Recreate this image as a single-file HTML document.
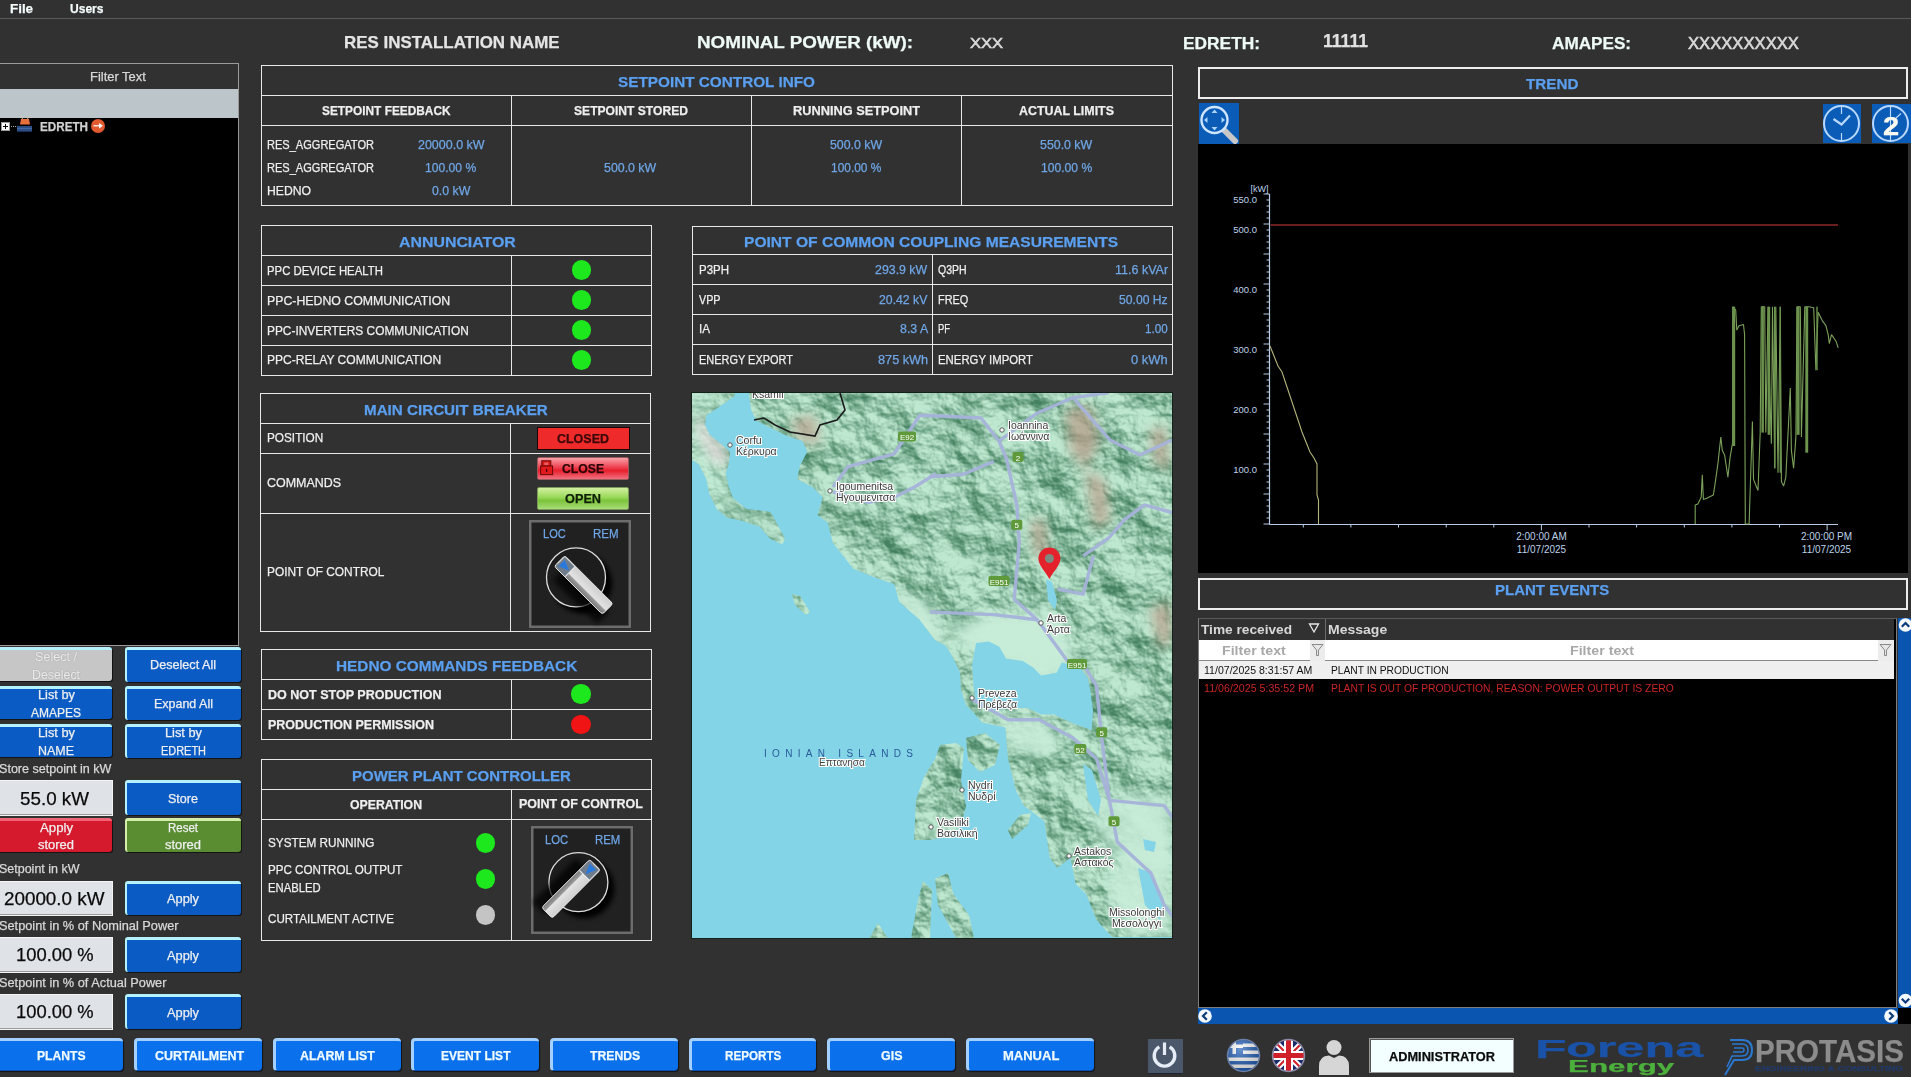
<!DOCTYPE html>
<html><head><meta charset="utf-8"><style>
html,body{margin:0;padding:0;}
body{width:1911px;height:1077px;position:relative;overflow:hidden;background:#313131;font-family:"Liberation Sans",sans-serif;}
.t{position:absolute;white-space:nowrap;transform-origin:0 0;-webkit-text-stroke:0.25px currentColor;}
</style></head><body>
<div class="t" style="left:9.50px;top:2.00px;font-size:13px;line-height:13px;color:#f4fbfb;font-weight:bold;transform:scaleX(1.0286);">File</div>
<div class="t" style="left:69.50px;top:2.00px;font-size:13px;line-height:13px;color:#f4fbfb;font-weight:bold;transform:scaleX(0.9270);">Users</div>
<div style="position:absolute;left:0px;top:18px;width:1911px;height:1px;background:#5a5a5a"></div>
<div class="t" style="left:344.00px;top:33.91px;font-size:17px;line-height:17px;color:#e4e4e4;font-weight:bold;transform:scaleX(0.9950);">RES INSTALLATION NAME</div>
<div class="t" style="left:697.00px;top:35.36px;font-size:16px;line-height:16px;color:#eefaf6;font-weight:bold;transform:scaleX(1.1760);">NOMINAL POWER (kW):</div>
<div class="t" style="left:970.00px;top:34.68px;font-size:15.5px;line-height:15.5px;color:#d8d8d8;transform:scaleX(1.0645);-webkit-text-stroke:0.6px currentColor;">XXX</div>
<div class="t" style="left:1183.00px;top:35.33px;font-size:16.5px;line-height:16.5px;color:#eefaf6;font-weight:bold;transform:scaleX(1.0511);">EDRETH:</div>
<div class="t" style="left:1323.00px;top:33.19px;font-size:17.5px;line-height:17.5px;color:#e0e0e0;font-weight:bold;transform:scaleX(1.0045);">11111</div>
<div class="t" style="left:1552.00px;top:35.23px;font-size:16.5px;line-height:16.5px;color:#eefaf6;font-weight:bold;transform:scaleX(1.0386);">AMAPES:</div>
<div class="t" style="left:1687.60px;top:34.93px;font-size:16.5px;line-height:16.5px;color:#d8d8d8;transform:scaleX(1.0077);-webkit-text-stroke:0.6px currentColor;">XXXXXXXXXX</div>
<div style="position:absolute;left:261px;top:65px;width:912px;height:141px;border:1px solid #e8e8e8;box-sizing:border-box;"></div>
<div style="position:absolute;left:261px;top:95px;width:912px;height:1px;background:#e8e8e8"></div>
<div style="position:absolute;left:261px;top:125px;width:912px;height:1px;background:#e8e8e8"></div>
<div style="position:absolute;left:511px;top:95px;width:1px;height:111px;background:#e8e8e8"></div>
<div style="position:absolute;left:751px;top:95px;width:1px;height:111px;background:#e8e8e8"></div>
<div style="position:absolute;left:961px;top:95px;width:1px;height:111px;background:#e8e8e8"></div>
<div class="t" style="left:618.00px;top:73.78px;font-size:15.5px;line-height:15.5px;color:#5a9ff0;font-weight:bold;transform:scaleX(0.9875);">SETPOINT CONTROL INFO</div>
<div class="t" style="left:322.00px;top:104.07px;font-size:13.5px;line-height:13.5px;color:#efefef;font-weight:bold;transform:scaleX(0.8789);">SETPOINT FEEDBACK</div>
<div class="t" style="left:574.00px;top:104.07px;font-size:13.5px;line-height:13.5px;color:#efefef;font-weight:bold;transform:scaleX(0.8955);">SETPOINT STORED</div>
<div class="t" style="left:792.50px;top:104.07px;font-size:13.5px;line-height:13.5px;color:#efefef;font-weight:bold;transform:scaleX(0.9464);">RUNNING SETPOINT</div>
<div class="t" style="left:1018.50px;top:104.07px;font-size:13.5px;line-height:13.5px;color:#efefef;font-weight:bold;transform:scaleX(0.9199);">ACTUAL LIMITS</div>
<div class="t" style="left:267.00px;top:138.82px;font-size:12.5px;line-height:12.5px;color:#efefef;transform:scaleX(0.8834);">RES_AGGREGATOR</div>
<div class="t" style="left:267.00px;top:161.92px;font-size:12.5px;line-height:12.5px;color:#efefef;transform:scaleX(0.8834);">RES_AGGREGATOR</div>
<div class="t" style="left:267.00px;top:184.82px;font-size:12.5px;line-height:12.5px;color:#efefef;transform:scaleX(0.9751);">HEDNO</div>
<div class="t" style="left:417.60px;top:138.82px;font-size:12.5px;line-height:12.5px;color:#6fa6e6;transform:scaleX(0.9978);">20000.0 kW</div>
<div class="t" style="left:425.40px;top:161.92px;font-size:12.5px;line-height:12.5px;color:#6fa6e6;transform:scaleX(0.9702);">100.00 %</div>
<div class="t" style="left:431.50px;top:184.82px;font-size:12.5px;line-height:12.5px;color:#6fa6e6;transform:scaleX(0.9872);">0.0 kW</div>
<div class="t" style="left:604.00px;top:161.92px;font-size:12.5px;line-height:12.5px;color:#6fa6e6;transform:scaleX(0.9891);">500.0 kW</div>
<div class="t" style="left:830.00px;top:138.82px;font-size:12.5px;line-height:12.5px;color:#6fa6e6;transform:scaleX(0.9872);">500.0 kW</div>
<div class="t" style="left:831.00px;top:161.92px;font-size:12.5px;line-height:12.5px;color:#6fa6e6;transform:scaleX(0.9532);">100.00 %</div>
<div class="t" style="left:1039.70px;top:138.82px;font-size:12.5px;line-height:12.5px;color:#6fa6e6;transform:scaleX(0.9891);">550.0 kW</div>
<div class="t" style="left:1040.50px;top:161.92px;font-size:12.5px;line-height:12.5px;color:#6fa6e6;transform:scaleX(0.9683);">100.00 %</div>
<div style="position:absolute;left:261px;top:225px;width:391px;height:151px;border:1px solid #e8e8e8;box-sizing:border-box;"></div>
<div style="position:absolute;left:261px;top:255px;width:391px;height:1px;background:#e8e8e8"></div>
<div style="position:absolute;left:261px;top:285px;width:391px;height:1px;background:#e8e8e8"></div>
<div style="position:absolute;left:261px;top:315px;width:391px;height:1px;background:#e8e8e8"></div>
<div style="position:absolute;left:261px;top:345px;width:391px;height:1px;background:#e8e8e8"></div>
<div style="position:absolute;left:511px;top:255px;width:1px;height:121px;background:#e8e8e8"></div>
<div class="t" style="left:398.50px;top:233.78px;font-size:15.5px;line-height:15.5px;color:#5a9ff0;font-weight:bold;transform:scaleX(1.0252);">ANNUNCIATOR</div>
<div class="t" style="left:267.30px;top:264.52px;font-size:12.5px;line-height:12.5px;color:#efefef;transform:scaleX(0.9081);">PPC DEVICE HEALTH</div>
<div style="position:absolute;left:571.7px;top:260.3px;width:19.6px;height:19.6px;border-radius:50%;background:#1de81d;"></div>
<div class="t" style="left:267.30px;top:294.62px;font-size:12.5px;line-height:12.5px;color:#efefef;transform:scaleX(0.9851);">PPC-HEDNO COMMUNICATION</div>
<div style="position:absolute;left:571.7px;top:290.4px;width:19.6px;height:19.6px;border-radius:50%;background:#1de81d;"></div>
<div class="t" style="left:267.30px;top:324.52px;font-size:12.5px;line-height:12.5px;color:#efefef;transform:scaleX(0.9514);">PPC-INVERTERS COMMUNICATION</div>
<div style="position:absolute;left:571.7px;top:320.3px;width:19.6px;height:19.6px;border-radius:50%;background:#1de81d;"></div>
<div class="t" style="left:267.30px;top:354.42px;font-size:12.5px;line-height:12.5px;color:#efefef;transform:scaleX(0.9644);">PPC-RELAY COMMUNICATION</div>
<div style="position:absolute;left:571.7px;top:350.2px;width:19.6px;height:19.6px;border-radius:50%;background:#1de81d;"></div>
<div style="position:absolute;left:692px;top:226px;width:481px;height:149px;border:1px solid #e8e8e8;box-sizing:border-box;"></div>
<div style="position:absolute;left:692px;top:254px;width:481px;height:1px;background:#e8e8e8"></div>
<div style="position:absolute;left:692px;top:284px;width:481px;height:1px;background:#e8e8e8"></div>
<div style="position:absolute;left:692px;top:314px;width:481px;height:1px;background:#e8e8e8"></div>
<div style="position:absolute;left:692px;top:344px;width:481px;height:1px;background:#e8e8e8"></div>
<div style="position:absolute;left:932px;top:254px;width:1px;height:121px;background:#e8e8e8"></div>
<div class="t" style="left:744.00px;top:233.58px;font-size:15.5px;line-height:15.5px;color:#5a9ff0;font-weight:bold;transform:scaleX(1.0059);">POINT OF COMMON COUPLING MEASUREMENTS</div>
<div class="t" style="left:698.50px;top:263.82px;font-size:12.5px;line-height:12.5px;color:#efefef;transform:scaleX(0.9195);">P3PH</div>
<div class="t" style="left:875.40px;top:263.82px;font-size:12.5px;line-height:12.5px;color:#6fa6e6;transform:scaleX(0.9891);">293.9 kW</div>
<div class="t" style="left:938.40px;top:263.82px;font-size:12.5px;line-height:12.5px;color:#efefef;transform:scaleX(0.8412);">Q3PH</div>
<div class="t" style="left:1114.50px;top:263.82px;font-size:12.5px;line-height:12.5px;color:#6fa6e6;transform:scaleX(1.0019);">11.6 kVAr</div>
<div class="t" style="left:698.50px;top:293.62px;font-size:12.5px;line-height:12.5px;color:#efefef;transform:scaleX(0.8600);">VPP</div>
<div class="t" style="left:879.30px;top:293.62px;font-size:12.5px;line-height:12.5px;color:#6fa6e6;transform:scaleX(0.9803);">20.42 kV</div>
<div class="t" style="left:938.40px;top:293.62px;font-size:12.5px;line-height:12.5px;color:#efefef;transform:scaleX(0.8719);">FREQ</div>
<div class="t" style="left:1119.00px;top:293.62px;font-size:12.5px;line-height:12.5px;color:#6fa6e6;transform:scaleX(0.9720);">50.00 Hz</div>
<div class="t" style="left:698.50px;top:323.42px;font-size:12.5px;line-height:12.5px;color:#efefef;transform:scaleX(0.9347);">IA</div>
<div class="t" style="left:899.50px;top:323.42px;font-size:12.5px;line-height:12.5px;color:#6fa6e6;transform:scaleX(0.9895);">8.3 A</div>
<div class="t" style="left:938.40px;top:323.42px;font-size:12.5px;line-height:12.5px;color:#efefef;transform:scaleX(0.7563);">PF</div>
<div class="t" style="left:1144.90px;top:323.42px;font-size:12.5px;line-height:12.5px;color:#6fa6e6;transform:scaleX(0.9313);">1.00</div>
<div class="t" style="left:698.50px;top:353.72px;font-size:12.5px;line-height:12.5px;color:#efefef;transform:scaleX(0.8765);">ENERGY EXPORT</div>
<div class="t" style="left:877.50px;top:353.72px;font-size:12.5px;line-height:12.5px;color:#6fa6e6;transform:scaleX(1.0167);">875 kWh</div>
<div class="t" style="left:938.40px;top:353.72px;font-size:12.5px;line-height:12.5px;color:#efefef;transform:scaleX(0.9102);">ENERGY IMPORT</div>
<div class="t" style="left:1131.00px;top:353.72px;font-size:12.5px;line-height:12.5px;color:#6fa6e6;transform:scaleX(1.0346);">0 kWh</div>
<div style="position:absolute;left:260px;top:393px;width:391px;height:239px;border:1px solid #e8e8e8;box-sizing:border-box;"></div>
<div style="position:absolute;left:260px;top:423px;width:391px;height:1px;background:#e8e8e8"></div>
<div style="position:absolute;left:260px;top:453px;width:391px;height:1px;background:#e8e8e8"></div>
<div style="position:absolute;left:260px;top:513px;width:391px;height:1px;background:#e8e8e8"></div>
<div style="position:absolute;left:510px;top:423px;width:1px;height:209px;background:#e8e8e8"></div>
<div class="t" style="left:364.00px;top:401.88px;font-size:15.5px;line-height:15.5px;color:#5a9ff0;font-weight:bold;transform:scaleX(0.9792);">MAIN CIRCUIT BREAKER</div>
<div class="t" style="left:267.30px;top:432.42px;font-size:12.5px;line-height:12.5px;color:#efefef;transform:scaleX(0.9423);">POSITION</div>
<div class="t" style="left:267.30px;top:477.42px;font-size:12.5px;line-height:12.5px;color:#efefef;transform:scaleX(0.9980);">COMMANDS</div>
<div class="t" style="left:267.30px;top:566.12px;font-size:12.5px;line-height:12.5px;color:#efefef;transform:scaleX(0.9516);">POINT OF CONTROL</div>
<div style="position:absolute;left:261px;top:649px;width:391px;height:91px;border:1px solid #e8e8e8;box-sizing:border-box;"></div>
<div style="position:absolute;left:261px;top:679px;width:391px;height:1px;background:#e8e8e8"></div>
<div style="position:absolute;left:261px;top:709px;width:391px;height:1px;background:#e8e8e8"></div>
<div style="position:absolute;left:511px;top:679px;width:1px;height:61px;background:#e8e8e8"></div>
<div class="t" style="left:336.20px;top:657.68px;font-size:15.5px;line-height:15.5px;color:#5a9ff0;font-weight:bold;transform:scaleX(0.9899);">HEDNO COMMANDS FEEDBACK</div>
<div class="t" style="left:268.00px;top:688.00px;font-size:13px;line-height:13px;color:#efefef;font-weight:bold;transform:scaleX(0.9636);">DO NOT STOP PRODUCTION</div>
<div class="t" style="left:268.00px;top:718.20px;font-size:13px;line-height:13px;color:#efefef;font-weight:bold;transform:scaleX(0.9615);">PRODUCTION PERMISSION</div>
<div style="position:absolute;left:571.2px;top:684.4000000000001px;width:19.6px;height:19.6px;border-radius:50%;background:#1de81d;"></div>
<div style="position:absolute;left:571.2px;top:714.5px;width:19.6px;height:19.6px;border-radius:50%;background:#f01414;"></div>
<div style="position:absolute;left:261px;top:759px;width:391px;height:182px;border:1px solid #e8e8e8;box-sizing:border-box;"></div>
<div style="position:absolute;left:261px;top:789px;width:391px;height:1px;background:#e8e8e8"></div>
<div style="position:absolute;left:261px;top:819px;width:391px;height:1px;background:#e8e8e8"></div>
<div style="position:absolute;left:511px;top:789px;width:1px;height:152px;background:#e8e8e8"></div>
<div class="t" style="left:352.30px;top:767.88px;font-size:15.5px;line-height:15.5px;color:#5a9ff0;font-weight:bold;transform:scaleX(0.9658);">POWER PLANT CONTROLLER</div>
<div class="t" style="left:350.00px;top:798.30px;font-size:13px;line-height:13px;color:#efefef;font-weight:bold;transform:scaleX(0.9435);">OPERATION</div>
<div class="t" style="left:519.20px;top:796.50px;font-size:13px;line-height:13px;color:#efefef;font-weight:bold;transform:scaleX(0.9581);">POINT OF CONTROL</div>
<div class="t" style="left:268.00px;top:836.72px;font-size:12.5px;line-height:12.5px;color:#efefef;transform:scaleX(0.9404);">SYSTEM RUNNING</div>
<div class="t" style="left:268.00px;top:864.02px;font-size:12.5px;line-height:12.5px;color:#efefef;transform:scaleX(0.9293);">PPC CONTROL OUTPUT</div>
<div class="t" style="left:268.00px;top:881.82px;font-size:12.5px;line-height:12.5px;color:#efefef;transform:scaleX(0.9011);">ENABLED</div>
<div class="t" style="left:268.00px;top:912.92px;font-size:12.5px;line-height:12.5px;color:#efefef;transform:scaleX(0.9299);">CURTAILMENT ACTIVE</div>
<div style="position:absolute;left:475.5px;top:833.2px;width:19.6px;height:19.6px;border-radius:50%;background:#1de81d;"></div>
<div style="position:absolute;left:475.5px;top:869.2px;width:19.6px;height:19.6px;border-radius:50%;background:#1de81d;"></div>
<div style="position:absolute;left:475.5px;top:905.2px;width:19.6px;height:19.6px;border-radius:50%;background:#c4c4c4;"></div>
<div style="position:absolute;left:0px;top:63px;width:239px;height:583px;box-sizing:border-box;border:1px solid #9a9a9a;border-left:none;background:#000"></div>
<div style="position:absolute;left:0px;top:64px;width:238px;height:25px;background:#313131"></div>
<div class="t" style="left:89.70px;top:70.92px;font-size:12.5px;line-height:12.5px;color:#d8d8d8;transform:scaleX(1.0333);">Filter Text</div>
<div style="position:absolute;left:0px;top:89px;width:238px;height:29px;background:#bcc5ca"></div>
<div style="position:absolute;left:1px;top:122px;width:9px;height:9px;background:#fafafa;box-sizing:border-box;border:1px solid #9a9a9a"></div>
<div style="position:absolute;left:3px;top:126px;width:5px;height:1px;background:#000"></div>
<div style="position:absolute;left:5px;top:124px;width:1px;height:5px;background:#000"></div>
<div style="position:absolute;left:11px;top:126px;width:5px;height:0;border-top:1px dotted #aaa"></div>
<svg style="position:absolute;left:16px;top:114px" width="18" height="19" viewBox="0 0 18 19"><path d="M5 2 L6.5 5 M13 2 L11.5 5" stroke="#d8c8a0" stroke-width="1"/><path d="M4 10.5 L5 5 H13 L14 10.5 Z" fill="#e8703a"/><rect x="1" y="12" width="15" height="5.6" fill="#2c4e86"/><path d="M1 14.5 H16" stroke="#4a6ea8" stroke-width="0.8"/></svg>
<div class="t" style="left:40.00px;top:120.64px;font-size:12px;line-height:12px;color:#d0d0d0;font-weight:bold;transform:scaleX(0.9732);">EDRETH</div>
<div style="position:absolute;left:90.7px;top:118.5px;width:14.6px;height:14.6px;border-radius:50%;background:#e25a30;"></div>
<svg style="position:absolute;left:91px;top:119px" width="14" height="14" viewBox="0 0 14 14"><path d="M2.5 6.8 H9" stroke="#fff" stroke-width="1.2"/><path d="M8 4 L12 6.8 L8 9.6 Z" fill="#fff"/></svg>
<div style="position:absolute;left:-3px;top:647px;width:115px;height:34px;box-sizing:border-box;background:#c6c6c6;border-top:3px solid #b4f2ff;border-left:2px solid #b4f2ff;border-radius:3px;box-shadow:1px 1px 0 #141414"></div>
<div class="t" style="left:35.00px;top:651.42px;font-size:12.5px;line-height:12.5px;color:#ececec;transform:scaleX(1.0060);text-shadow:0 0 1px #555;">Select /</div>
<div class="t" style="left:32.00px;top:668.62px;font-size:12.5px;line-height:12.5px;color:#ececec;transform:scaleX(0.9871);text-shadow:0 0 1px #555;">Deselect</div>
<div style="position:absolute;left:125px;top:647px;width:116px;height:35px;box-sizing:border-box;background:#0a5cc4;border-top:3px solid #b4f2ff;border-left:2px solid #b4f2ff;border-radius:3px;box-shadow:1px 1px 0 #141414"></div>
<div class="t" style="left:150.00px;top:659.42px;font-size:12.5px;line-height:12.5px;color:#efefef;transform:scaleX(1.0115);">Deselect All</div>
<div style="position:absolute;left:-3px;top:686px;width:115px;height:33px;box-sizing:border-box;background:#0a5cc4;border-top:3px solid #b4f2ff;border-left:2px solid #b4f2ff;border-radius:3px;box-shadow:1px 1px 0 #141414"></div>
<div class="t" style="left:37.50px;top:689.42px;font-size:12.5px;line-height:12.5px;color:#efefef;transform:scaleX(1.0242);">List by</div>
<div class="t" style="left:31.00px;top:706.92px;font-size:12.5px;line-height:12.5px;color:#efefef;transform:scaleX(0.9592);">AMAPES</div>
<div style="position:absolute;left:125px;top:686px;width:116px;height:34px;box-sizing:border-box;background:#0a5cc4;border-top:3px solid #b4f2ff;border-left:2px solid #b4f2ff;border-radius:3px;box-shadow:1px 1px 0 #141414"></div>
<div class="t" style="left:153.50px;top:697.92px;font-size:12.5px;line-height:12.5px;color:#efefef;transform:scaleX(0.9979);">Expand All</div>
<div style="position:absolute;left:-3px;top:724px;width:115px;height:33px;box-sizing:border-box;background:#0a5cc4;border-top:3px solid #b4f2ff;border-left:2px solid #b4f2ff;border-radius:3px;box-shadow:1px 1px 0 #141414"></div>
<div class="t" style="left:37.50px;top:727.42px;font-size:12.5px;line-height:12.5px;color:#efefef;transform:scaleX(1.0242);">List by</div>
<div class="t" style="left:38.00px;top:744.92px;font-size:12.5px;line-height:12.5px;color:#efefef;transform:scaleX(0.9965);">NAME</div>
<div style="position:absolute;left:125px;top:724px;width:116px;height:34px;box-sizing:border-box;background:#0a5cc4;border-top:3px solid #b4f2ff;border-left:2px solid #b4f2ff;border-radius:3px;box-shadow:1px 1px 0 #141414"></div>
<div class="t" style="left:164.50px;top:727.42px;font-size:12.5px;line-height:12.5px;color:#efefef;transform:scaleX(1.0242);">List by</div>
<div class="t" style="left:160.50px;top:744.92px;font-size:12.5px;line-height:12.5px;color:#efefef;transform:scaleX(0.8759);">EDRETH</div>
<div class="t" style="left:-1.00px;top:762.92px;font-size:12.5px;line-height:12.5px;color:#d8d8d8;transform:scaleX(1.0056);">Store setpoint in kW</div>
<div style="position:absolute;left:0;top:780px;width:113px;height:36px;box-sizing:border-box;background:#dfe2e6;border:1px solid #f4f4f4;border-left:none;box-shadow:inset 0 -1px 0 #9a9a9a"></div>
<div class="t" style="left:20.00px;top:788.72px;font-size:19px;line-height:19px;color:#0a0a0a;transform:scaleX(0.9895);">55.0 kW</div>
<div style="position:absolute;left:125px;top:780px;width:116px;height:35px;box-sizing:border-box;background:#0a5cc4;border-top:3px solid #b4f2ff;border-left:2px solid #b4f2ff;border-radius:3px;box-shadow:1px 1px 0 #141414"></div>
<div class="t" style="left:168.00px;top:792.92px;font-size:12.5px;line-height:12.5px;color:#efefef;transform:scaleX(1.0042);">Store</div>
<div style="position:absolute;left:-3px;top:818px;width:115px;height:34px;box-sizing:border-box;background:#d51a2e;border-top:3px solid #f06478;border-left:2px solid #f06478;border-radius:3px;box-shadow:1px 1px 0 #141414"></div>
<div class="t" style="left:39.50px;top:821.92px;font-size:12.5px;line-height:12.5px;color:#efefef;transform:scaleX(1.0560);">Apply</div>
<div class="t" style="left:38.00px;top:839.42px;font-size:12.5px;line-height:12.5px;color:#efefef;transform:scaleX(1.0360);">stored</div>
<div style="position:absolute;left:125px;top:818px;width:116px;height:34px;box-sizing:border-box;background:#5a8c32;border-top:3px solid #d4eeaa;border-left:2px solid #d4eeaa;border-radius:3px;box-shadow:1px 1px 0 #141414"></div>
<div class="t" style="left:168.00px;top:821.92px;font-size:12.5px;line-height:12.5px;color:#efefef;transform:scaleX(0.9195);">Reset</div>
<div class="t" style="left:165.00px;top:839.42px;font-size:12.5px;line-height:12.5px;color:#efefef;transform:scaleX(1.0360);">stored</div>
<div class="t" style="left:-1.00px;top:862.92px;font-size:12.5px;line-height:12.5px;color:#d8d8d8;transform:scaleX(0.9984);">Setpoint in kW</div>
<div style="position:absolute;left:0;top:881px;width:113px;height:35px;box-sizing:border-box;background:#dfe2e6;border:1px solid #f4f4f4;border-left:none;box-shadow:inset 0 -1px 0 #9a9a9a"></div>
<div class="t" style="left:4.00px;top:888.92px;font-size:19px;line-height:19px;color:#0a0a0a;transform:scaleX(0.9905);">20000.0 kW</div>
<div style="position:absolute;left:125px;top:881px;width:116px;height:34px;box-sizing:border-box;background:#0a5cc4;border-top:3px solid #b4f2ff;border-left:2px solid #b4f2ff;border-radius:3px;box-shadow:1px 1px 0 #141414"></div>
<div class="t" style="left:167.00px;top:893.42px;font-size:12.5px;line-height:12.5px;color:#efefef;transform:scaleX(1.0240);">Apply</div>
<div class="t" style="left:-1.00px;top:919.92px;font-size:12.5px;line-height:12.5px;color:#d8d8d8;transform:scaleX(1.0213);">Setpoint in % of Nominal Power</div>
<div style="position:absolute;left:0;top:937px;width:113px;height:36px;box-sizing:border-box;background:#dfe2e6;border:1px solid #f4f4f4;border-left:none;box-shadow:inset 0 -1px 0 #9a9a9a"></div>
<div class="t" style="left:15.80px;top:945.42px;font-size:19px;line-height:19px;color:#0a0a0a;transform:scaleX(0.9668);">100.00 %</div>
<div style="position:absolute;left:125px;top:937px;width:116px;height:35px;box-sizing:border-box;background:#0a5cc4;border-top:3px solid #b4f2ff;border-left:2px solid #b4f2ff;border-radius:3px;box-shadow:1px 1px 0 #141414"></div>
<div class="t" style="left:167.00px;top:949.92px;font-size:12.5px;line-height:12.5px;color:#efefef;transform:scaleX(1.0240);">Apply</div>
<div class="t" style="left:-1.00px;top:976.92px;font-size:12.5px;line-height:12.5px;color:#d8d8d8;transform:scaleX(1.0213);">Setpoint in % of Actual Power</div>
<div style="position:absolute;left:0;top:994px;width:113px;height:36px;box-sizing:border-box;background:#dfe2e6;border:1px solid #f4f4f4;border-left:none;box-shadow:inset 0 -1px 0 #9a9a9a"></div>
<div class="t" style="left:15.80px;top:1002.42px;font-size:19px;line-height:19px;color:#0a0a0a;transform:scaleX(0.9668);">100.00 %</div>
<div style="position:absolute;left:125px;top:994px;width:116px;height:35px;box-sizing:border-box;background:#0a5cc4;border-top:3px solid #b4f2ff;border-left:2px solid #b4f2ff;border-radius:3px;box-shadow:1px 1px 0 #141414"></div>
<div class="t" style="left:167.00px;top:1006.92px;font-size:12.5px;line-height:12.5px;color:#efefef;transform:scaleX(1.0240);">Apply</div>
<div style="position:absolute;left:-6px;top:1038px;width:129px;height:33px;box-sizing:border-box;background:#0a70ec;border-top:3px solid #a4d0ff;border-left:3px solid #a4d0ff;border-bottom:1px solid #0a50b0;border-radius:4px;box-shadow:1px 1px 1px #141414"></div>
<div class="t" style="left:36.60px;top:1049.37px;font-size:13.5px;line-height:13.5px;color:#f0fbff;font-weight:bold;transform:scaleX(0.9000);">PLANTS</div>
<div style="position:absolute;left:134px;top:1038px;width:128px;height:33px;box-sizing:border-box;background:#0a70ec;border-top:3px solid #a4d0ff;border-left:3px solid #a4d0ff;border-bottom:1px solid #0a50b0;border-radius:4px;box-shadow:1px 1px 1px #141414"></div>
<div class="t" style="left:154.60px;top:1049.37px;font-size:13.5px;line-height:13.5px;color:#f0fbff;font-weight:bold;transform:scaleX(0.9241);">CURTAILMENT</div>
<div style="position:absolute;left:273px;top:1038px;width:128px;height:33px;box-sizing:border-box;background:#0a70ec;border-top:3px solid #a4d0ff;border-left:3px solid #a4d0ff;border-bottom:1px solid #0a50b0;border-radius:4px;box-shadow:1px 1px 1px #141414"></div>
<div class="t" style="left:300.40px;top:1049.37px;font-size:13.5px;line-height:13.5px;color:#f0fbff;font-weight:bold;transform:scaleX(0.9146);">ALARM LIST</div>
<div style="position:absolute;left:411px;top:1038px;width:128px;height:33px;box-sizing:border-box;background:#0a70ec;border-top:3px solid #a4d0ff;border-left:3px solid #a4d0ff;border-bottom:1px solid #0a50b0;border-radius:4px;box-shadow:1px 1px 1px #141414"></div>
<div class="t" style="left:441.00px;top:1049.37px;font-size:13.5px;line-height:13.5px;color:#f0fbff;font-weight:bold;transform:scaleX(0.8907);">EVENT LIST</div>
<div style="position:absolute;left:550px;top:1038px;width:128px;height:33px;box-sizing:border-box;background:#0a70ec;border-top:3px solid #a4d0ff;border-left:3px solid #a4d0ff;border-bottom:1px solid #0a50b0;border-radius:4px;box-shadow:1px 1px 1px #141414"></div>
<div class="t" style="left:590.00px;top:1049.37px;font-size:13.5px;line-height:13.5px;color:#f0fbff;font-weight:bold;transform:scaleX(0.9047);">TRENDS</div>
<div style="position:absolute;left:689px;top:1038px;width:127px;height:33px;box-sizing:border-box;background:#0a70ec;border-top:3px solid #a4d0ff;border-left:3px solid #a4d0ff;border-bottom:1px solid #0a50b0;border-radius:4px;box-shadow:1px 1px 1px #141414"></div>
<div class="t" style="left:724.80px;top:1049.37px;font-size:13.5px;line-height:13.5px;color:#f0fbff;font-weight:bold;transform:scaleX(0.8634);">REPORTS</div>
<div style="position:absolute;left:827px;top:1038px;width:128px;height:33px;box-sizing:border-box;background:#0a70ec;border-top:3px solid #a4d0ff;border-left:3px solid #a4d0ff;border-bottom:1px solid #0a50b0;border-radius:4px;box-shadow:1px 1px 1px #141414"></div>
<div class="t" style="left:881.30px;top:1049.37px;font-size:13.5px;line-height:13.5px;color:#f0fbff;font-weight:bold;transform:scaleX(0.9216);">GIS</div>
<div style="position:absolute;left:966px;top:1038px;width:128px;height:33px;box-sizing:border-box;background:#0a70ec;border-top:3px solid #a4d0ff;border-left:3px solid #a4d0ff;border-bottom:1px solid #0a50b0;border-radius:4px;box-shadow:1px 1px 1px #141414"></div>
<div class="t" style="left:1002.90px;top:1049.37px;font-size:13.5px;line-height:13.5px;color:#f0fbff;font-weight:bold;transform:scaleX(0.9631);">MANUAL</div>
<div style="position:absolute;left:1148px;top:1039px;width:35px;height:34px;background:#4b586b;box-shadow:0 1px 0 #1e2430"></div>
<svg style="position:absolute;left:1148px;top:1039px" width="35" height="34" viewBox="0 0 35 34"><path d="M11.35 7.9 A10.3 10.3 0 1 0 21.65 7.9" stroke="#e6ecf6" stroke-width="3.4" fill="none"/><path d="M16.5 3.5 V16" stroke="#e6ecf6" stroke-width="3.2"/></svg>
<div style="position:absolute;left:537px;top:427px;width:93px;height:23px;box-sizing:border-box;background:#ee2a2a;border:1.5px solid #1a0808"></div>
<div class="t" style="left:556.80px;top:432.00px;font-size:13px;line-height:13px;color:#3a0808;font-weight:bold;transform:scaleX(0.9592);">CLOSED</div>
<div style="position:absolute;left:537px;top:457px;width:92px;height:23px;box-sizing:border-box;border-radius:2px;background:linear-gradient(#f7a0a8,#ee4050 45%,#e8202e 60%,#f07080);border:1px solid #9a5a5a"></div>
<svg style="position:absolute;left:540px;top:460px" width="14" height="16" viewBox="0 0 14 16"><rect x="1.8" y="0.8" width="9" height="5.5" fill="#d81818" stroke="#6a0a0a" stroke-width="1"/><rect x="4.3" y="2.5" width="4" height="2.5" fill="#f06060"/><rect x="0.6" y="6" width="12" height="8.6" fill="#e01a1a" stroke="#6a0a0a" stroke-width="1"/><path d="M6.6 9 V12" stroke="#400" stroke-width="1.2"/></svg>
<div class="t" style="left:562.00px;top:462.00px;font-size:13px;line-height:13px;color:#2a0606;font-weight:bold;transform:scaleX(0.9414);">CLOSE</div>
<div style="position:absolute;left:537px;top:487px;width:92px;height:23px;box-sizing:border-box;border-radius:2px;background:linear-gradient(#d2f0a0,#98d858 45%,#7cc43c 60%,#a8dc78);border:1px solid #7a9a5a"></div>
<div class="t" style="left:565.00px;top:491.60px;font-size:13px;line-height:13px;color:#102008;font-weight:bold;transform:scaleX(0.9785);">OPEN</div>
<svg style="position:absolute;left:529px;top:520px" width="102" height="108" viewBox="0 0 102 108">
<defs><linearGradient id="hg529" x1="0" y1="0" x2="0" y2="1"><stop offset="0" stop-color="#cfcfcf"/><stop offset="0.64" stop-color="#e2e2e2"/><stop offset="0.7" stop-color="#9a9a9a"/><stop offset="1" stop-color="#7a7a7a"/></linearGradient>
<filter id="bl529" x="-50%" y="-50%" width="200%" height="200%"><feGaussianBlur stdDeviation="2.5"/></filter></defs>
<rect x="1.25" y="1.25" width="99.5" height="105.5" fill="#212121" stroke="#6c6c6c" stroke-width="2.5"/>
<circle cx="53" cy="63.39999999999998" r="30" fill="#030303" filter="url(#bl529)"/>
<circle cx="47" cy="57.39999999999998" r="29.5" fill="#1d1d1d" stroke="#dedede" stroke-width="1.3"/>
<g transform="translate(54.6,64.99999999999997) rotate(45)">
<rect x="-30" y="-4" width="62" height="17" fill="#000" opacity="0.7" filter="url(#bl529)" transform="translate(5,5)"/>
<rect x="-34" y="-7.5" width="68" height="15" rx="2.5" fill="url(#hg529)" stroke="#f0f0f0" stroke-width="0.9"/>
<path d="M-33 -6.5 L-19 -6.5 L-19 6.5 L-33 6.5 Z" fill="#6f7c8c"/>
<path d="M-31 -4.5 L-20.5 0 L-31 4.5 Z" fill="#2a7ade"/>
<path d="M-19 -7 L-19 7" stroke="#f0f0f0" stroke-width="1"/>
</g></svg>
<div class="t" style="left:543.00px;top:527.82px;font-size:12.5px;line-height:12.5px;color:#6fa6e6;transform:scaleX(0.8854);">LOC</div>
<div class="t" style="left:592.70px;top:527.82px;font-size:12.5px;line-height:12.5px;color:#6fa6e6;transform:scaleX(0.9225);">REM</div>
<svg style="position:absolute;left:531px;top:826px" width="102" height="108" viewBox="0 0 102 108">
<defs><linearGradient id="hg531" x1="0" y1="0" x2="0" y2="1"><stop offset="0" stop-color="#cfcfcf"/><stop offset="0.64" stop-color="#e2e2e2"/><stop offset="0.7" stop-color="#9a9a9a"/><stop offset="1" stop-color="#7a7a7a"/></linearGradient>
<filter id="bl531" x="-50%" y="-50%" width="200%" height="200%"><feGaussianBlur stdDeviation="2.5"/></filter></defs>
<rect x="1.25" y="1.25" width="99.5" height="105.5" fill="#212121" stroke="#6c6c6c" stroke-width="2.5"/>
<circle cx="53.39999999999998" cy="62.200000000000045" r="30" fill="#030303" filter="url(#bl531)"/>
<circle cx="47.39999999999998" cy="56.200000000000045" r="29.5" fill="#1d1d1d" stroke="#dedede" stroke-width="1.3"/>
<g transform="translate(39.99999999999998,62.80000000000005) rotate(135)">
<rect x="-30" y="-4" width="62" height="17" fill="#000" opacity="0.7" filter="url(#bl531)" transform="translate(5,5)"/>
<rect x="-34" y="-7.5" width="68" height="15" rx="2.5" fill="url(#hg531)" stroke="#f0f0f0" stroke-width="0.9"/>
<path d="M-33 -6.5 L-19 -6.5 L-19 6.5 L-33 6.5 Z" fill="#6f7c8c"/>
<path d="M-31 -4.5 L-20.5 0 L-31 4.5 Z" fill="#2a7ade"/>
<path d="M-19 -7 L-19 7" stroke="#f0f0f0" stroke-width="1"/>
</g></svg>
<div class="t" style="left:544.90px;top:833.82px;font-size:12.5px;line-height:12.5px;color:#6fa6e6;transform:scaleX(0.9049);">LOC</div>
<div class="t" style="left:594.70px;top:833.82px;font-size:12.5px;line-height:12.5px;color:#6fa6e6;transform:scaleX(0.9117);">REM</div>
<svg style="position:absolute;left:692px;top:393px" width="480" height="545" viewBox="0 0 480 545"><defs><filter id="relief" x="0" y="0" width="100%" height="100%" color-interpolation-filters="sRGB"><feTurbulence type="fractalNoise" baseFrequency="0.022" numOctaves="5" seed="11" result="n"/><feDiffuseLighting in="n" surfaceScale="14" diffuseConstant="1.05" lighting-color="#ffffff" result="l"><feDistantLight azimuth="300" elevation="45"/></feDiffuseLighting><feColorMatrix in="l" type="matrix" values="0.48 0 0 0 0.27  0.40 0 0 0 0.51  0.44 0 0 0 0.38  0 0 0 0 1" result="c"/><feComposite in="c" in2="SourceGraphic" operator="in"/></filter><filter id="mb" x="-30%" y="-30%" width="160%" height="160%"><feGaussianBlur stdDeviation="6"/></filter></defs><rect width="480" height="545" fill="#84d4e8"/><g filter="url(#relief)"><polygon points="56.7,0.0 480.0,0.0 480.0,544.0 420.0,544.0 404.5,527.0 394.0,501.0 383.6,490.7 378.4,464.7 365.4,475.0 357.6,464.7 352.4,428.2 331.6,412.6 323.8,397.0 316.0,365.8 313.4,334.6 290.0,329.4 282.0,320.0 274.0,312.0 269.0,297.0 268.0,279.0 258.0,259.0 253.0,252.0 243.0,247.0 227.7,226.7 207.3,208.8 202.2,191.0 186.9,185.9 161.4,175.7 140.9,150.1 135.8,129.7 125.6,122.0 130.7,104.2 120.5,94.0 105.2,86.3 107.7,73.6 115.4,58.3 110.3,48.0 95.0,43.0 64.4,27.6 59.3,17.4" fill="#000"/><polygon points="0.0,0.0 42.6,0.0 42.6,3.0 27.7,13.4 14.4,22.3 12.9,31.2 17.3,41.6 32.2,53.5 38.1,59.4 36.6,71.3 33.7,80.2 36.6,93.6 41.1,105.5 54.5,115.9 78.3,118.9 81.2,123.4 93.1,145.7 90.2,151.6 78.3,145.7 67.9,133.8 50.0,127.8 35.2,124.8 24.8,115.9 17.3,101.1 14.4,86.2 6.9,71.3 0.0,66.9" fill="#000"/><polygon points="248.0,352.0 264.0,350.0 272.0,355.0 269.0,387.0 274.0,413.0 269.0,433.5 253.6,444.0 238.0,447.0 222.0,447.0 224.0,407.0 232.0,384.0 243.0,366.0" fill="#000"/><polygon points="274.0,345.0 293.0,340.0 308.0,352.0 303.0,372.0 288.0,379.0 276.0,367.0" fill="#000"/><polygon points="316.0,437.0 328.0,422.0 339.0,420.0 336.0,432.0 320.0,446.0" fill="#000"/><polygon points="243.0,485.5 256.0,480.0 261.4,501.0 277.0,522.0 282.0,545.0 264.0,545.0 245.8,511.5" fill="#000"/><polygon points="219.0,545.0 226.0,507.0 231.0,488.0 240.0,497.0 238.0,545.0" fill="#000"/><polygon points="177.5,545.0 186.0,530.0 195.7,545.0" fill="#000"/><polygon points="100.0,201.0 108.0,203.0 118.0,219.0 114.0,222.0 103.0,212.0" fill="#000"/></g><clipPath id="landclip"><polygon points="56.7,0.0 480.0,0.0 480.0,544.0 420.0,544.0 404.5,527.0 394.0,501.0 383.6,490.7 378.4,464.7 365.4,475.0 357.6,464.7 352.4,428.2 331.6,412.6 323.8,397.0 316.0,365.8 313.4,334.6 290.0,329.4 282.0,320.0 274.0,312.0 269.0,297.0 268.0,279.0 258.0,259.0 253.0,252.0 243.0,247.0 227.7,226.7 207.3,208.8 202.2,191.0 186.9,185.9 161.4,175.7 140.9,150.1 135.8,129.7 125.6,122.0 130.7,104.2 120.5,94.0 105.2,86.3 107.7,73.6 115.4,58.3 110.3,48.0 95.0,43.0 64.4,27.6 59.3,17.4"/><polygon points="0.0,0.0 42.6,0.0 42.6,3.0 27.7,13.4 14.4,22.3 12.9,31.2 17.3,41.6 32.2,53.5 38.1,59.4 36.6,71.3 33.7,80.2 36.6,93.6 41.1,105.5 54.5,115.9 78.3,118.9 81.2,123.4 93.1,145.7 90.2,151.6 78.3,145.7 67.9,133.8 50.0,127.8 35.2,124.8 24.8,115.9 17.3,101.1 14.4,86.2 6.9,71.3 0.0,66.9"/><polygon points="248.0,352.0 264.0,350.0 272.0,355.0 269.0,387.0 274.0,413.0 269.0,433.5 253.6,444.0 238.0,447.0 222.0,447.0 224.0,407.0 232.0,384.0 243.0,366.0"/><polygon points="274.0,345.0 293.0,340.0 308.0,352.0 303.0,372.0 288.0,379.0 276.0,367.0"/><polygon points="316.0,437.0 328.0,422.0 339.0,420.0 336.0,432.0 320.0,446.0"/><polygon points="243.0,485.5 256.0,480.0 261.4,501.0 277.0,522.0 282.0,545.0 264.0,545.0 245.8,511.5"/><polygon points="219.0,545.0 226.0,507.0 231.0,488.0 240.0,497.0 238.0,545.0"/><polygon points="177.5,545.0 186.0,530.0 195.7,545.0"/><polygon points="100.0,201.0 108.0,203.0 118.0,219.0 114.0,222.0 103.0,212.0"/></clipPath><g clip-path="url(#landclip)"><g filter="url(#mb)"><polygon points="373.0,17.0 398.0,12.0 408.0,47.0 393.0,77.0 378.0,57.0" fill="#b89e8a" opacity="0.75"/><polygon points="393.0,77.0 413.0,87.0 418.0,127.0 403.0,137.0" fill="#b89e8a" opacity="0.75"/><polygon points="458.0,37.0 473.0,32.0 478.0,77.0 463.0,72.0" fill="#b89e8a" opacity="0.75"/><polygon points="338.0,127.0 353.0,127.0 356.0,167.0 343.0,162.0" fill="#b89e8a" opacity="0.75"/><polygon points="458.0,217.0 478.0,207.0 480.0,247.0 468.0,257.0" fill="#b89e8a" opacity="0.75"/><polygon points="98.0,27.0 123.0,22.0 128.0,52.0 108.0,47.0" fill="#b89e8a" opacity="0.75"/><polygon points="398.0,407.0 438.0,407.0 480.0,447.0 480.0,487.0 438.0,467.0 408.0,447.0" fill="#c4ead6" opacity="0.8"/><polygon points="284.0,225.0 348.0,225.0 368.0,247.0 383.0,267.0 370.0,269.0 349.0,283.0 330.0,268.0 313.0,265.0 307.0,253.0 284.0,250.0" fill="#c4ead6" opacity="0.8"/><polygon points="258.0,232.0 308.0,219.0 348.0,232.0 373.0,257.0 368.0,279.0 308.0,262.0 278.0,257.0" fill="#c8ecd8" opacity="0.9"/><polygon points="203.0,197.0 233.0,207.0 258.0,247.0 248.0,257.0 213.0,222.0" fill="#c8ecd8" opacity="0.9"/><polygon points="428.0,397.0 480.0,407.0 480.0,457.0 438.0,437.0" fill="#c8ecd8" opacity="0.9"/><polygon points="108.0,127.0 148.0,167.0 203.0,207.0 238.0,243.0 258.0,262.0 243.0,269.0 198.0,232.0 148.0,195.0 113.0,155.0" fill="#c8ecd8" opacity="0.9"/><polygon points="293.0,222.0 348.0,219.0 378.0,247.0 388.0,287.0 348.0,297.0 298.0,267.0 268.0,247.0" fill="#c8ecd8" opacity="0.9"/><polygon points="428.0,447.0 480.0,457.0 480.0,544.0 438.0,544.0 418.0,507.0" fill="#c8ecd8" opacity="0.9"/><polygon points="308.0,327.0 348.0,322.0 368.0,347.0 348.0,367.0 318.0,352.0" fill="#c8ecd8" opacity="0.9"/><polygon points="0.0,0.0 42.6,0.0 42.6,3.0 27.7,13.4 14.4,22.3 12.9,31.2 17.3,41.6 32.2,53.5 38.1,59.4 36.6,71.3 33.7,80.2 36.6,93.6 41.1,105.5 54.5,115.9 78.3,118.9 81.2,123.4 93.1,145.7 90.2,151.6 78.3,145.7 67.9,133.8 50.0,127.8 35.2,124.8 24.8,115.9 17.3,101.1 14.4,86.2 6.9,71.3 0.0,66.9" fill="#c4ead6" opacity="0.45"/><polygon points="12.0,24.0 18.0,39.0 34.0,54.0 37.0,63.0 35.0,74.0 20.0,69.0 8.0,47.0 3.0,27.0" fill="#e4dcdc" opacity="0.85"/></g></g><polygon points="284.0,249.9 297.0,248.6 307.4,253.8 313.9,265.5 330.8,268.1 341.2,274.6 349.0,282.4 364.6,279.8 369.8,269.4 388.0,274.6 395.8,285.0 398.4,298.0 401.0,317.5 399.7,337.0 381.5,330.5 362.0,321.4 349.0,321.4 336.0,315.0 323.0,315.0 297.0,317.5 284.0,311.0 281.4,291.5 280.1,272.0" fill="#84d4e8"/><polygon points="391.0,371.0 400.0,377.0 409.0,407.0 406.0,423.0 396.0,407.0" fill="#84d4e8"/><polygon points="446.0,475.0 458.0,479.0 472.0,507.0 468.0,527.0 453.0,512.0" fill="#84d4e8"/><polygon points="354.0,186.0 360.0,189.0 365.0,207.0 363.0,217.0 356.0,207.0" fill="#84d4e8"/><polygon points="451.0,446.0 464.0,449.0 462.0,459.0 453.0,457.0" fill="#84d4e8"/><polyline points="238.0,22.5 289.0,25.0 307.0,48.0 314.6,66.0 324.8,111.9 327.3,150.0 322.2,206.3 345.2,226.7 378.4,271.9 388.8,267.0" fill="none" stroke="#a6b2da" stroke-width="3.4" stroke-linejoin="round" opacity="0.95"/><polyline points="307.0,48.0 345.2,20.0 381.0,4.7 416.7,-0.4" fill="none" stroke="#a6b2da" stroke-width="3.4" stroke-linejoin="round" opacity="0.95"/><polyline points="238.0,83.8 271.2,81.2 301.8,68.5" fill="none" stroke="#a6b2da" stroke-width="3.4" stroke-linejoin="round" opacity="0.95"/><polyline points="391.1,162.9 416.7,145.0 432.0,127.2 452.4,111.9 480.0,119.5" fill="none" stroke="#a6b2da" stroke-width="3.4" stroke-linejoin="round" opacity="0.95"/><polyline points="365.6,196.0 391.1,201.2 401.4,162.9" fill="none" stroke="#a6b2da" stroke-width="3.4" stroke-linejoin="round" opacity="0.95"/><polyline points="238.0,219.0 301.8,221.6 345.2,226.7" fill="none" stroke="#a6b2da" stroke-width="3.4" stroke-linejoin="round" opacity="0.95"/><polyline points="141.0,99.0 176.7,109.3 202.2,104.2 222.6,94.0 243.0,81.2 238.0,83.8" fill="none" stroke="#a6b2da" stroke-width="3.4" stroke-linejoin="round" opacity="0.95"/><polyline points="141.0,94.0 156.2,73.6 202.2,60.8 227.7,22.5 238.0,22.5" fill="none" stroke="#a6b2da" stroke-width="3.4" stroke-linejoin="round" opacity="0.95"/><polyline points="279.6,306.0 316.0,326.8 347.2,326.8 381.0,345.0 404.5,365.8 417.5,407.4 472.0,412.6 483.0,428.0" fill="none" stroke="#a6b2da" stroke-width="3.4" stroke-linejoin="round" opacity="0.95"/><polyline points="388.8,267.0 404.5,293.0 409.7,345.0 417.5,407.4 425.3,449.0 459.0,480.3 472.0,511.5 483.0,527.0" fill="none" stroke="#a6b2da" stroke-width="3.4" stroke-linejoin="round" opacity="0.95"/><polyline points="480.0,47.0 448.0,62.0 418.0,47.0 381.0,4.7" fill="none" stroke="#a6b2da" stroke-width="3.4" stroke-linejoin="round" opacity="0.95"/><polyline points="62.0,27.0 72.0,25.0 83.0,32.0 98.0,39.0 123.0,43.0 128.0,32.0 145.0,27.0 153.0,17.0 148.0,0.0" fill="none" stroke="#1a1a1a" stroke-width="1.6"/><rect x="206.0" y="38.5" width="18" height="10" rx="2" fill="#5f9a3a"/><text x="215" y="47.0" font-family="Liberation Sans" font-size="8" fill="#fff" text-anchor="middle">E92</text><rect x="320.5" y="59" width="11" height="10" rx="2" fill="#5f9a3a"/><text x="326" y="67.5" font-family="Liberation Sans" font-size="8" fill="#fff" text-anchor="middle">2</text><rect x="319.29999999999995" y="126.79999999999995" width="11" height="10" rx="2" fill="#5f9a3a"/><text x="324.79999999999995" y="135.29999999999995" font-family="Liberation Sans" font-size="8" fill="#fff" text-anchor="middle">5</text><rect x="296.5" y="183" width="21" height="10" rx="2" fill="#5f9a3a"/><text x="307" y="191.5" font-family="Liberation Sans" font-size="8" fill="#fff" text-anchor="middle">E951</text><rect x="375.0" y="266" width="20" height="10" rx="2" fill="#5f9a3a"/><text x="385" y="274.5" font-family="Liberation Sans" font-size="8" fill="#fff" text-anchor="middle">E951</text><rect x="404.20000000000005" y="334.29999999999995" width="11" height="10" rx="2" fill="#5f9a3a"/><text x="409.70000000000005" y="342.79999999999995" font-family="Liberation Sans" font-size="8" fill="#fff" text-anchor="middle">5</text><rect x="382.29999999999995" y="351" width="12" height="10" rx="2" fill="#5f9a3a"/><text x="388.29999999999995" y="359.5" font-family="Liberation Sans" font-size="8" fill="#fff" text-anchor="middle">52</text><rect x="416.5" y="423.20000000000005" width="11" height="10" rx="2" fill="#5f9a3a"/><text x="422" y="431.70000000000005" font-family="Liberation Sans" font-size="8" fill="#fff" text-anchor="middle">5</text><circle cx="38" cy="52" r="2.2" fill="#fff" stroke="#555" stroke-width="1"/><text x="44" y="51" font-family="Liberation Sans" font-size="10.5" fill="#3a3a3a" stroke="#fff" stroke-width="2.2" paint-order="stroke">Corfu</text><text x="44" y="62" font-family="Liberation Sans" font-size="10.5" fill="#3a3a3a" stroke="#fff" stroke-width="2.2" paint-order="stroke">Κέρκυρα</text><circle cx="310" cy="37" r="2.2" fill="#fff" stroke="#555" stroke-width="1"/><text x="316" y="36" font-family="Liberation Sans" font-size="10.5" fill="#3a3a3a" stroke="#fff" stroke-width="2.2" paint-order="stroke">Ioannina</text><text x="316" y="47" font-family="Liberation Sans" font-size="10.5" fill="#3a3a3a" stroke="#fff" stroke-width="2.2" paint-order="stroke">Ιωάννινα</text><circle cx="138" cy="98" r="2.2" fill="#fff" stroke="#555" stroke-width="1"/><text x="144" y="97" font-family="Liberation Sans" font-size="10.5" fill="#3a3a3a" stroke="#fff" stroke-width="2.2" paint-order="stroke">Igoumenitsa</text><text x="144" y="108" font-family="Liberation Sans" font-size="10.5" fill="#3a3a3a" stroke="#fff" stroke-width="2.2" paint-order="stroke">Ηγουμενιτσα</text><circle cx="349" cy="230" r="2.2" fill="#fff" stroke="#555" stroke-width="1"/><text x="355" y="229" font-family="Liberation Sans" font-size="10.5" fill="#3a3a3a" stroke="#fff" stroke-width="2.2" paint-order="stroke">Arta</text><text x="355" y="240" font-family="Liberation Sans" font-size="10.5" fill="#3a3a3a" stroke="#fff" stroke-width="2.2" paint-order="stroke">Άρτα</text><circle cx="280" cy="305" r="2.2" fill="#fff" stroke="#555" stroke-width="1"/><text x="286" y="304" font-family="Liberation Sans" font-size="10.5" fill="#3a3a3a" stroke="#fff" stroke-width="2.2" paint-order="stroke">Preveza</text><text x="286" y="315" font-family="Liberation Sans" font-size="10.5" fill="#3a3a3a" stroke="#fff" stroke-width="2.2" paint-order="stroke">Πρέβεζα</text><circle cx="270" cy="397" r="2.2" fill="#fff" stroke="#555" stroke-width="1"/><text x="276" y="396" font-family="Liberation Sans" font-size="10.5" fill="#3a3a3a" stroke="#fff" stroke-width="2.2" paint-order="stroke">Nydri</text><text x="276" y="407" font-family="Liberation Sans" font-size="10.5" fill="#3a3a3a" stroke="#fff" stroke-width="2.2" paint-order="stroke">Νυδρί</text><circle cx="239" cy="434" r="2.2" fill="#fff" stroke="#555" stroke-width="1"/><text x="245" y="433" font-family="Liberation Sans" font-size="10.5" fill="#3a3a3a" stroke="#fff" stroke-width="2.2" paint-order="stroke">Vasiliki</text><text x="245" y="444" font-family="Liberation Sans" font-size="10.5" fill="#3a3a3a" stroke="#fff" stroke-width="2.2" paint-order="stroke">Βασιλική</text><circle cx="377" cy="463" r="2.2" fill="#fff" stroke="#555" stroke-width="1"/><text x="382" y="462" font-family="Liberation Sans" font-size="10.5" fill="#3a3a3a" stroke="#fff" stroke-width="2.2" paint-order="stroke">Astakos</text><text x="382" y="473" font-family="Liberation Sans" font-size="10.5" fill="#3a3a3a" stroke="#fff" stroke-width="2.2" paint-order="stroke">Αστακός</text><text x="417" y="523" font-family="Liberation Sans" font-size="10.5" fill="#3a3a3a" stroke="#fff" stroke-width="2.2" paint-order="stroke">Missolonghi</text><text x="420" y="534" font-family="Liberation Sans" font-size="10.5" fill="#3a3a3a" stroke="#fff" stroke-width="2.2" paint-order="stroke">Μεσολόγγι</text><text x="60" y="5" font-family="Liberation Sans" font-size="10.5" fill="#3a3a3a" stroke="#fff" stroke-width="2.2" paint-order="stroke">Ksamil</text><text x="72" y="364" font-family="Liberation Sans" font-size="10" fill="#2a5a9a" letter-spacing="5.3">IONIAN ISLANDS</text><text x="127" y="373" font-family="Liberation Sans" font-size="10" fill="#444" stroke="#fff" stroke-width="2" paint-order="stroke">Επτανησα</text><path d="M357.4000000000001 186.0 C353.4000000000001 178.5 346.4000000000001 172.5 346.4000000000001 165.5 A11 11 0 1 1 368.4000000000001 165.5 C368.4000000000001 172.5 361.4000000000001 178.5 357.4000000000001 186.0 Z" fill="#e4222c"/><circle cx="357.4000000000001" cy="165.5" r="4.5" fill="#7d8a80"/></svg>
<div style="position:absolute;left:691px;top:392px;width:482px;height:547px;box-sizing:border-box;border:1px solid #14201a"></div>
<div style="position:absolute;left:1198px;top:67px;width:710px;height:32px;box-sizing:border-box;border:2px solid #ededed"></div>
<div class="t" style="left:1526.20px;top:75.68px;font-size:15.5px;line-height:15.5px;color:#5a9ff0;font-weight:bold;transform:scaleX(0.9809);">TREND</div>
<svg style="position:absolute;left:1199px;top:103px" width="40" height="41" viewBox="0 0 40 41">
<rect width="40" height="41" fill="#0b5cb6"/>
<line x1="22" y1="24" x2="36" y2="38" stroke="#c8c8c8" stroke-width="6" stroke-linecap="round"/>
<circle cx="15.5" cy="17" r="13" fill="#0b5cb6" stroke="#cfe4ff" stroke-width="2.4"/>
<path d="M15.5 6.5 L18.5 10 H12.5 Z M15.5 27.5 L18.5 24 H12.5 Z M5 17 L8.5 14 V20 Z M26 17 L22.5 14 V20 Z" fill="#a8d4ff"/>
</svg>
<svg style="position:absolute;left:1823px;top:104px" width="38" height="39" viewBox="0 0 38 39">
<rect width="38" height="39" fill="#0b5cb6"/>
<circle cx="18.5" cy="19.5" r="17.5" fill="none" stroke="#b8d8ff" stroke-width="2"/>
<path d="M18.5 2 V10 M18.5 29 V37" stroke="#b8d8ff" stroke-width="1.2"/>
<path d="M10.5 15 L18.5 20.5 L27 11.5" stroke="#b8d8ff" stroke-width="2.2" fill="none"/>
</svg>
<svg style="position:absolute;left:1872px;top:104px" width="39" height="39" viewBox="0 0 39 39">
<rect width="39" height="39" fill="#0b5cb6"/>
<circle cx="18.5" cy="19.5" r="17.5" fill="none" stroke="#b8d8ff" stroke-width="2"/>
<path d="M18.5 2 V37 M24 14 L29 9.5" stroke="#b8d8ff" stroke-width="1.2"/>
</svg>
<div class="t" style="left:1883.30px;top:112.79px;font-size:26px;line-height:26px;color:#fffaf0;font-weight:bold;transform:scaleX(1.1195);">2</div>
<div style="position:absolute;left:1198px;top:144px;width:710px;height:429px;background:#000"></div>
<svg style="position:absolute;left:1198px;top:144px" width="710" height="429" viewBox="0 0 710 429"><line x1="71.5" y1="50" x2="71.5" y2="380.5" stroke="#b9cde6" stroke-width="1.2"/><line x1="65.5" y1="380.0" x2="71.5" y2="380.0" stroke="#b9cde6" stroke-width="1"/><line x1="68.5" y1="374.0" x2="71.5" y2="374.0" stroke="#b9cde6" stroke-width="1"/><line x1="68.5" y1="368.0" x2="71.5" y2="368.0" stroke="#b9cde6" stroke-width="1"/><line x1="68.5" y1="362.0" x2="71.5" y2="362.0" stroke="#b9cde6" stroke-width="1"/><line x1="68.5" y1="356.0" x2="71.5" y2="356.0" stroke="#b9cde6" stroke-width="1"/><line x1="65.5" y1="350.0" x2="71.5" y2="350.0" stroke="#b9cde6" stroke-width="1"/><line x1="68.5" y1="344.0" x2="71.5" y2="344.0" stroke="#b9cde6" stroke-width="1"/><line x1="68.5" y1="338.0" x2="71.5" y2="338.0" stroke="#b9cde6" stroke-width="1"/><line x1="68.5" y1="332.0" x2="71.5" y2="332.0" stroke="#b9cde6" stroke-width="1"/><line x1="68.5" y1="326.0" x2="71.5" y2="326.0" stroke="#b9cde6" stroke-width="1"/><line x1="65.5" y1="320.0" x2="71.5" y2="320.0" stroke="#b9cde6" stroke-width="1"/><line x1="68.5" y1="314.0" x2="71.5" y2="314.0" stroke="#b9cde6" stroke-width="1"/><line x1="68.5" y1="308.0" x2="71.5" y2="308.0" stroke="#b9cde6" stroke-width="1"/><line x1="68.5" y1="302.0" x2="71.5" y2="302.0" stroke="#b9cde6" stroke-width="1"/><line x1="68.5" y1="296.0" x2="71.5" y2="296.0" stroke="#b9cde6" stroke-width="1"/><line x1="65.5" y1="290.0" x2="71.5" y2="290.0" stroke="#b9cde6" stroke-width="1"/><line x1="68.5" y1="284.0" x2="71.5" y2="284.0" stroke="#b9cde6" stroke-width="1"/><line x1="68.5" y1="278.0" x2="71.5" y2="278.0" stroke="#b9cde6" stroke-width="1"/><line x1="68.5" y1="272.0" x2="71.5" y2="272.0" stroke="#b9cde6" stroke-width="1"/><line x1="68.5" y1="266.0" x2="71.5" y2="266.0" stroke="#b9cde6" stroke-width="1"/><line x1="65.5" y1="260.0" x2="71.5" y2="260.0" stroke="#b9cde6" stroke-width="1"/><line x1="68.5" y1="254.0" x2="71.5" y2="254.0" stroke="#b9cde6" stroke-width="1"/><line x1="68.5" y1="248.0" x2="71.5" y2="248.0" stroke="#b9cde6" stroke-width="1"/><line x1="68.5" y1="242.0" x2="71.5" y2="242.0" stroke="#b9cde6" stroke-width="1"/><line x1="68.5" y1="236.0" x2="71.5" y2="236.0" stroke="#b9cde6" stroke-width="1"/><line x1="65.5" y1="230.0" x2="71.5" y2="230.0" stroke="#b9cde6" stroke-width="1"/><line x1="68.5" y1="224.0" x2="71.5" y2="224.0" stroke="#b9cde6" stroke-width="1"/><line x1="68.5" y1="218.0" x2="71.5" y2="218.0" stroke="#b9cde6" stroke-width="1"/><line x1="68.5" y1="212.0" x2="71.5" y2="212.0" stroke="#b9cde6" stroke-width="1"/><line x1="68.5" y1="206.0" x2="71.5" y2="206.0" stroke="#b9cde6" stroke-width="1"/><line x1="65.5" y1="200.0" x2="71.5" y2="200.0" stroke="#b9cde6" stroke-width="1"/><line x1="68.5" y1="194.0" x2="71.5" y2="194.0" stroke="#b9cde6" stroke-width="1"/><line x1="68.5" y1="188.0" x2="71.5" y2="188.0" stroke="#b9cde6" stroke-width="1"/><line x1="68.5" y1="182.0" x2="71.5" y2="182.0" stroke="#b9cde6" stroke-width="1"/><line x1="68.5" y1="176.0" x2="71.5" y2="176.0" stroke="#b9cde6" stroke-width="1"/><line x1="65.5" y1="170.0" x2="71.5" y2="170.0" stroke="#b9cde6" stroke-width="1"/><line x1="68.5" y1="164.0" x2="71.5" y2="164.0" stroke="#b9cde6" stroke-width="1"/><line x1="68.5" y1="158.0" x2="71.5" y2="158.0" stroke="#b9cde6" stroke-width="1"/><line x1="68.5" y1="152.0" x2="71.5" y2="152.0" stroke="#b9cde6" stroke-width="1"/><line x1="68.5" y1="146.0" x2="71.5" y2="146.0" stroke="#b9cde6" stroke-width="1"/><line x1="65.5" y1="140.0" x2="71.5" y2="140.0" stroke="#b9cde6" stroke-width="1"/><line x1="68.5" y1="134.0" x2="71.5" y2="134.0" stroke="#b9cde6" stroke-width="1"/><line x1="68.5" y1="128.0" x2="71.5" y2="128.0" stroke="#b9cde6" stroke-width="1"/><line x1="68.5" y1="122.0" x2="71.5" y2="122.0" stroke="#b9cde6" stroke-width="1"/><line x1="68.5" y1="116.0" x2="71.5" y2="116.0" stroke="#b9cde6" stroke-width="1"/><line x1="65.5" y1="110.0" x2="71.5" y2="110.0" stroke="#b9cde6" stroke-width="1"/><line x1="68.5" y1="104.0" x2="71.5" y2="104.0" stroke="#b9cde6" stroke-width="1"/><line x1="68.5" y1="98.0" x2="71.5" y2="98.0" stroke="#b9cde6" stroke-width="1"/><line x1="68.5" y1="92.0" x2="71.5" y2="92.0" stroke="#b9cde6" stroke-width="1"/><line x1="68.5" y1="86.0" x2="71.5" y2="86.0" stroke="#b9cde6" stroke-width="1"/><line x1="65.5" y1="80.0" x2="71.5" y2="80.0" stroke="#b9cde6" stroke-width="1"/><line x1="68.5" y1="74.0" x2="71.5" y2="74.0" stroke="#b9cde6" stroke-width="1"/><line x1="68.5" y1="68.0" x2="71.5" y2="68.0" stroke="#b9cde6" stroke-width="1"/><line x1="68.5" y1="62.0" x2="71.5" y2="62.0" stroke="#b9cde6" stroke-width="1"/><line x1="68.5" y1="56.0" x2="71.5" y2="56.0" stroke="#b9cde6" stroke-width="1"/><line x1="65.5" y1="50.0" x2="71.5" y2="50.0" stroke="#b9cde6" stroke-width="1"/><line x1="71.5" y1="380.5" x2="640" y2="380.5" stroke="#b9cde6" stroke-width="1.2"/><line x1="105.3" y1="380.5" x2="105.3" y2="383.5" stroke="#b9cde6" stroke-width="1"/><line x1="152.9" y1="380.5" x2="152.9" y2="383.5" stroke="#b9cde6" stroke-width="1"/><line x1="200.5" y1="380.5" x2="200.5" y2="383.5" stroke="#b9cde6" stroke-width="1"/><line x1="248.2" y1="380.5" x2="248.2" y2="383.5" stroke="#b9cde6" stroke-width="1"/><line x1="295.8" y1="380.5" x2="295.8" y2="383.5" stroke="#b9cde6" stroke-width="1"/><line x1="343.4" y1="380.5" x2="343.4" y2="386.5" stroke="#b9cde6" stroke-width="1"/><line x1="391.0" y1="380.5" x2="391.0" y2="383.5" stroke="#b9cde6" stroke-width="1"/><line x1="438.6" y1="380.5" x2="438.6" y2="383.5" stroke="#b9cde6" stroke-width="1"/><line x1="486.3" y1="380.5" x2="486.3" y2="383.5" stroke="#b9cde6" stroke-width="1"/><line x1="533.9" y1="380.5" x2="533.9" y2="383.5" stroke="#b9cde6" stroke-width="1"/><line x1="581.5" y1="380.5" x2="581.5" y2="383.5" stroke="#b9cde6" stroke-width="1"/><line x1="629.1" y1="380.5" x2="629.1" y2="386.5" stroke="#b9cde6" stroke-width="1"/><text x="59" y="58.8" font-family="Liberation Sans" font-size="9.5" fill="#bcd2ea" text-anchor="end">550.0</text><text x="59" y="88.8" font-family="Liberation Sans" font-size="9.5" fill="#bcd2ea" text-anchor="end">500.0</text><text x="59" y="148.8" font-family="Liberation Sans" font-size="9.5" fill="#bcd2ea" text-anchor="end">400.0</text><text x="59" y="208.8" font-family="Liberation Sans" font-size="9.5" fill="#bcd2ea" text-anchor="end">300.0</text><text x="59" y="268.8" font-family="Liberation Sans" font-size="9.5" fill="#bcd2ea" text-anchor="end">200.0</text><text x="59" y="328.8" font-family="Liberation Sans" font-size="9.5" fill="#bcd2ea" text-anchor="end">100.0</text><text x="70.5" y="47.5" font-family="Liberation Sans" font-size="9" fill="#bcd2ea" text-anchor="end">[kW]</text><text x="343.5" y="396" font-family="Liberation Sans" font-size="10" fill="#bcd2ea" text-anchor="middle">2:00:00 AM</text><text x="343.5" y="409" font-family="Liberation Sans" font-size="10" fill="#bcd2ea" text-anchor="middle">11/07/2025</text><text x="628.5" y="396" font-family="Liberation Sans" font-size="10" fill="#bcd2ea" text-anchor="middle">2:00:00 PM</text><text x="628.5" y="409" font-family="Liberation Sans" font-size="10" fill="#bcd2ea" text-anchor="middle">11/07/2025</text><line x1="72.5" y1="81" x2="640" y2="81" stroke="#8c2a2a" stroke-width="1.4"/><polyline points="72,202 76,212 80,222 84,228 88,240 92,252 96,264 100,276 104,288 108,298 112,308 116,314 119,320 119,351 120.5,356 120.5,380" fill="none" stroke="#b4b47c" stroke-width="1.1"/><polyline points="497.2,380.0 497.2,361.0 499.8,359.9 503.2,353.2 504.3,330.9 505.4,355.4 508.7,354.3 515.4,351.0 517.7,335.4 519.9,319.8 522.8,293.1 524.3,306.4 526.6,310.9 529.9,333.2 532.1,313.1 534.8,297.5 534.8,162.7 537.7,166.0 538.8,186.1 541.0,181.7 545.5,180.5 546.6,190.6 547.3,380.0 551.1,380.0 554.4,277.5 555.5,335.4 560.0,346.5 562.2,288.6 563.3,162.7 566.7,162.7 567.8,288.6 570.0,162.7 572.2,261.9 573.4,299.7 574.5,162.7 576.7,324.3 577.8,162.7 580.0,328.7 582.3,162.7 583.4,337.6 585.6,342.1 587.8,333.2 592.3,244.0 593.4,306.4 595.6,324.3 597.9,293.1 599.0,162.7 602.3,162.7 603.4,293.1 606.8,162.7 610.8,162.7 615.7,163.8 617.9,226.2 620.1,168.3 624.6,177.2 627.9,181.7 630.2,190.6 631.3,199.5 633.5,190.6 638.0,197.2 640.2,203.9" fill="none" stroke="#7ba15a" stroke-width="1.1" stroke-linejoin="bevel"/><rect x="534.2" y="162.7" width="3.0" height="139.3" fill="#6c934e"/><rect x="563.4" y="162.7" width="2.5" height="125.9" fill="#6c934e"/><rect x="569.6" y="162.7" width="2.6" height="128.1" fill="#6c934e"/><rect x="576.0" y="162.7" width="1.5" height="161.6" fill="#6c934e"/><rect x="581.6" y="162.7" width="1.4" height="166.0" fill="#6c934e"/><rect x="598.5" y="162.7" width="3.1" height="128.1" fill="#6c934e"/><rect x="607.3" y="162.7" width="2.9" height="146.0" fill="#6c934e"/><rect x="618.3" y="162.7" width="1.4" height="63.5" fill="#6c934e"/></svg>
<div style="position:absolute;left:1198px;top:578px;width:710px;height:32px;box-sizing:border-box;border:2px solid #ededed"></div>
<div class="t" style="left:1495.30px;top:582.08px;font-size:15.5px;line-height:15.5px;color:#5a9ff0;font-weight:bold;transform:scaleX(0.9682);">PLANT EVENTS</div>
<div style="position:absolute;left:1198px;top:618px;width:699px;height:390px;background:#000;box-sizing:border-box;border:1px solid #7d7d7d;border-top:1px solid #5a5a5a"></div>
<div style="position:absolute;left:1199px;top:619px;width:695px;height:21px;background:#313131"></div>
<div style="position:absolute;left:1325px;top:619px;width:1px;height:21px;background:#6a6a6a"></div>
<div class="t" style="left:1200.60px;top:622.90px;font-size:13px;line-height:13px;color:#d8d8d8;font-weight:bold;transform:scaleX(1.0526);-webkit-text-stroke:0;">Time received</div>
<div class="t" style="left:1328.40px;top:622.90px;font-size:13px;line-height:13px;color:#d8d8d8;font-weight:bold;transform:scaleX(1.0773);-webkit-text-stroke:0;">Message</div>
<svg style="position:absolute;left:1308px;top:622px" width="12" height="12" viewBox="0 0 12 12"><path d="M1.5 2 H10.5 L6 10 Z" fill="none" stroke="#e8e8e8" stroke-width="1.3"/></svg>
<div style="position:absolute;left:1199px;top:640px;width:695px;height:21px;background:#ffffff;box-shadow:inset 0 -1px 0 #8a8a8a"></div>
<div style="position:absolute;left:1310px;top:640px;width:15px;height:21px;background:#ececec"></div>
<div style="position:absolute;left:1878px;top:640px;width:16px;height:21px;background:#ececec"></div>
<div class="t" style="left:1222.00px;top:643.60px;font-size:13px;line-height:13px;color:#a8a8a8;font-weight:bold;transform:scaleX(1.0906);-webkit-text-stroke:0;">Filter text</div>
<div class="t" style="left:1569.80px;top:643.60px;font-size:13px;line-height:13px;color:#a8a8a8;font-weight:bold;transform:scaleX(1.0923);-webkit-text-stroke:0;">Filter text</div>
<svg style="position:absolute;left:1311px;top:643px" width="13" height="14" viewBox="0 0 13 14"><path d="M1 1.5 H12 L7.5 7 V12.5 H5.5 V7 Z" fill="#e6e6e6" stroke="#8a8a8a" stroke-width="1"/></svg>
<svg style="position:absolute;left:1879px;top:643px" width="13" height="14" viewBox="0 0 13 14"><path d="M1 1.5 H12 L7.5 7 V12.5 H5.5 V7 Z" fill="#e6e6e6" stroke="#8a8a8a" stroke-width="1"/></svg>
<div style="position:absolute;left:1199px;top:661px;width:695px;height:18px;background:#efefef"></div>
<div class="t" style="left:1204.00px;top:665.31px;font-size:10.5px;line-height:10.5px;color:#111;transform:scaleX(1.0052);-webkit-text-stroke:0;">11/07/2025 8:31:57 AM</div>
<div class="t" style="left:1331.30px;top:665.31px;font-size:10.5px;line-height:10.5px;color:#111;transform:scaleX(0.9756);-webkit-text-stroke:0;">PLANT IN PRODUCTION</div>
<div class="t" style="left:1204.00px;top:682.51px;font-size:10.5px;line-height:10.5px;color:#cc2626;transform:scaleX(1.0151);-webkit-text-stroke:0;">11/06/2025 5:35:52 PM</div>
<div class="t" style="left:1331.00px;top:682.51px;font-size:10.5px;line-height:10.5px;color:#cc2626;transform:scaleX(0.9825);-webkit-text-stroke:0;">PLANT IS OUT OF PRODUCTION, REASON: POWER OUTPUT IS ZERO</div>
<div style="position:absolute;left:1898px;top:618px;width:13px;height:390px;background:#0a55b0"></div>
<svg style="position:absolute;left:1897px;top:617px" width="15" height="16" viewBox="0 0 15 16"><circle cx="8.5" cy="8" r="6.8" fill="#f4f8ff"/><path d="M4.8 9.8 L8.5 6 L12.2 9.8" stroke="#0d3a78" stroke-width="2.2" fill="none"/></svg>
<svg style="position:absolute;left:1897px;top:992px" width="15" height="16" viewBox="0 0 15 16"><circle cx="8.5" cy="8.5" r="6.8" fill="#f4f8ff"/><path d="M4.8 6.8 L8.5 10.5 L12.2 6.8" stroke="#0d3a78" stroke-width="2.2" fill="none"/></svg>
<div style="position:absolute;left:1198px;top:1008px;width:700px;height:16px;background:#0a55b0"></div>
<div style="position:absolute;left:1898px;top:1008px;width:13px;height:16px;background:#000"></div>
<svg style="position:absolute;left:1197px;top:1008px" width="16" height="16" viewBox="0 0 16 16"><circle cx="8" cy="8" r="6.8" fill="#f4f8ff"/><path d="M9.8 4.3 L6 8 L9.8 11.7" stroke="#0d3a78" stroke-width="2.2" fill="none"/></svg>
<svg style="position:absolute;left:1883px;top:1008px" width="16" height="16" viewBox="0 0 16 16"><circle cx="8" cy="8" r="6.8" fill="#f4f8ff"/><path d="M6.2 4.3 L10 8 L6.2 11.7" stroke="#0d3a78" stroke-width="2.2" fill="none"/></svg>
<svg style="position:absolute;left:1226px;top:1038px" width="36" height="36" viewBox="0 0 36 36">
<defs><clipPath id="cg"><circle cx="17.5" cy="17.5" r="15.5"/></clipPath><radialGradient id="gl" cx="0.4" cy="0.3" r="0.8"><stop offset="0" stop-color="#fff" stop-opacity="0.35"/><stop offset="1" stop-color="#000" stop-opacity="0.25"/></radialGradient></defs>
<g clip-path="url(#cg)"><rect width="36" height="36" fill="#1a5ab8"/>
<rect y="5.5" width="36" height="3.5" fill="#fff"/><rect y="12.5" width="36" height="3.5" fill="#fff"/><rect y="19.5" width="36" height="3.5" fill="#fff"/><rect y="26.5" width="36" height="3.5" fill="#fff"/>
<rect x="0" y="0" width="17" height="16" fill="#1a5ab8"/><rect x="0" y="6.5" width="17" height="3.5" fill="#fff"/><rect x="6.5" y="0" width="3.5" height="16" fill="#fff"/>
<circle cx="17.5" cy="17.5" r="15.5" fill="url(#gl)"/></g>
<circle cx="17.5" cy="17.5" r="16" fill="none" stroke="#6a7fa8" stroke-width="1.5"/></svg>
<svg style="position:absolute;left:1271px;top:1038px" width="36" height="36" viewBox="0 0 36 36">
<defs><clipPath id="cu"><circle cx="17.5" cy="17.5" r="15.5"/></clipPath></defs>
<g clip-path="url(#cu)"><rect width="36" height="36" fill="#1a2a6a"/>
<path d="M0 0 L36 36 M36 0 L0 36" stroke="#fff" stroke-width="6"/>
<path d="M0 0 L36 36 M36 0 L0 36" stroke="#d0202a" stroke-width="2"/>
<rect x="13" y="0" width="9" height="36" fill="#fff"/><rect x="0" y="13" width="36" height="9" fill="#fff"/>
<rect x="15" y="0" width="5" height="36" fill="#d0202a"/><rect x="0" y="15" width="36" height="5" fill="#d0202a"/></g>
<circle cx="17.5" cy="17.5" r="16" fill="none" stroke="#8a8aa8" stroke-width="1.5"/></svg>
<svg style="position:absolute;left:1317px;top:1039px" width="34" height="37" viewBox="0 0 34 37">
<circle cx="17" cy="8.5" r="7.5" fill="#d6d6d6"/>
<path d="M2 36 V27 Q2 17 12 16.5 L17 19 L22 16.5 Q32 17 32 27 V36 Z" fill="#d6d6d6"/></svg>
<div style="position:absolute;left:1369px;top:1038px;width:145px;height:35px;box-sizing:border-box;background:#f2feff;border:1px solid #9a9a9a;box-shadow:inset 1px 1px 0 #555"></div>
<div class="t" style="left:1389.00px;top:1050.00px;font-size:13px;line-height:13px;color:#0a0a0a;font-weight:bold;transform:scaleX(0.9824);">ADMINISTRATOR</div>
<div class="t" style="left:1535.40px;top:1037.14px;font-size:25px;line-height:25px;color:#1a52a8;font-weight:bold;transform:scaleX(2.0721);">F</div>
<div class="t" style="left:1566.00px;top:1035.44px;font-size:27px;line-height:27px;color:#1a52a8;font-weight:bold;transform:scaleX(1.8654);">orena</div>
<div class="t" style="left:1567.70px;top:1058.76px;font-size:16px;line-height:16px;color:#4cb03c;font-weight:bold;transform:scaleX(1.9598);">Energy</div>
<svg style="position:absolute;left:1722px;top:1037px" width="32" height="40" viewBox="0 0 32 40">
<path d="M8 3 H20 Q30 3 30 13 Q30 23 20 23 H12 L3 38" stroke="#2a78d0" stroke-width="2" fill="none"/>
<path d="M10 7 H20 Q26 7 26 13 Q26 19 20 19 H10 L5 30" stroke="#2a78d0" stroke-width="1.6" fill="none"/>
<path d="M12 11 H20 Q22 11 22 13 Q22 15 20 15 H11" stroke="#2a78d0" stroke-width="1.4" fill="none"/></svg>
<div class="t" style="left:1755.00px;top:1035.41px;font-size:32px;line-height:32px;color:#8c8c8c;font-weight:bold;transform:scaleX(0.9239);">PROTASIS</div>
<div class="t" style="left:1755.00px;top:1065.07px;font-size:7px;line-height:7px;color:#223a68;font-weight:bold;transform:scaleX(1.4266);">ENGINEERING &amp; CONSULTING</div>
</body></html>
